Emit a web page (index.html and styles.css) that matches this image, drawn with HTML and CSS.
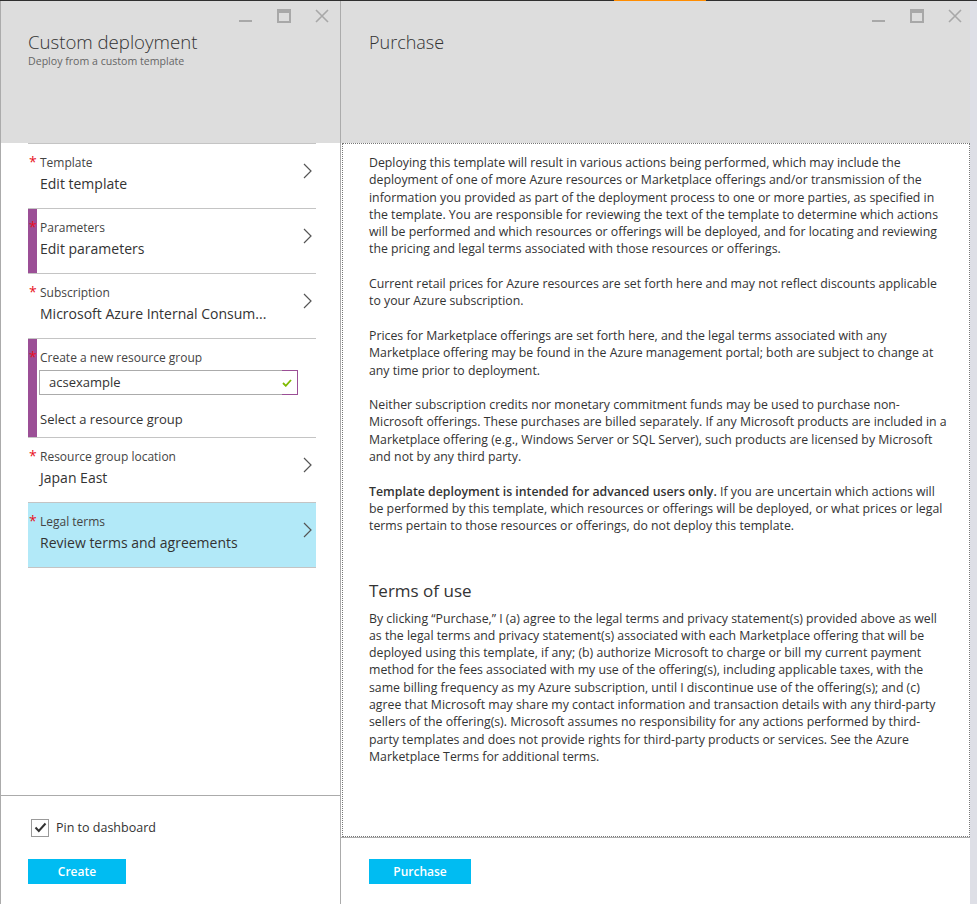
FILE: index.html
```html
<!DOCTYPE html>
<html lang="en">
<head>
<meta charset="utf-8">
<title>Custom deployment</title>
<link rel="stylesheet" href="styles.css">
</head>
<body>
<div class="topbar"><span class="topbar-accent"></span></div>
<div class="app">
  <section class="blade blade-left">
    <header class="blade-header">
      <div class="controls">
        <svg class="ctl" width="14" height="14" viewBox="0 0 14 14"><rect x="0" y="11" width="13" height="2" fill="#a8a8a8"/></svg>
        <svg class="ctl" width="14" height="14" viewBox="0 0 14 14"><rect x="1" y="1" width="12" height="12" fill="none" stroke="#a8a8a8" stroke-width="2"/><rect x="0" y="0" width="14" height="4" fill="#a8a8a8"/></svg>
        <svg class="ctl" width="14" height="14" viewBox="0 0 14 14"><path d="M1 1 L13 13 M13 1 L1 13" stroke="#a8a8a8" stroke-width="1.6" fill="none"/></svg>
      </div>
      <h1 class="blade-title">Custom deployment</h1>
      <p class="blade-subtitle">Deploy from a custom template</p>
    </header>
    <div class="blade-body">
      <ul class="steps">
        <li class="step">
          <div class="step-text"><span class="step-label req">Template</span><span class="step-value">Edit template</span></div>
          <svg class="chev" width="9" height="16" viewBox="0 0 9 16"><polyline points="1,1 8,8 1,15" fill="none" stroke="#555" stroke-width="1.2"/></svg>
        </li>
        <li class="step step-active">
          <div class="step-text"><span class="step-label req">Parameters</span><span class="step-value">Edit parameters</span></div>
          <svg class="chev" width="9" height="16" viewBox="0 0 9 16"><polyline points="1,1 8,8 1,15" fill="none" stroke="#555" stroke-width="1.2"/></svg>
        </li>
        <li class="step">
          <div class="step-text"><span class="step-label req">Subscription</span><span class="step-value">Microsoft Azure Internal Consum...</span></div>
          <svg class="chev" width="9" height="16" viewBox="0 0 9 16"><polyline points="1,1 8,8 1,15" fill="none" stroke="#555" stroke-width="1.2"/></svg>
        </li>
        <li class="step step-active step-group">
          <span class="step-label req">Create a new resource group</span>
          <div class="input">
            <span class="input-field">acsexample</span>
            <span class="input-status"><svg width="10" height="8" viewBox="0 0 10 8"><polyline points="1,4 3.8,6.8 9,1" fill="none" stroke="#7fba00" stroke-width="1.8"/></svg></span>
          </div>
          <span class="step-link">Select a resource group</span>
        </li>
        <li class="step">
          <div class="step-text"><span class="step-label req">Resource group location</span><span class="step-value">Japan East</span></div>
          <svg class="chev" width="9" height="16" viewBox="0 0 9 16"><polyline points="1,1 8,8 1,15" fill="none" stroke="#555" stroke-width="1.2"/></svg>
        </li>
        <li class="step step-selected">
          <div class="step-text"><span class="step-label req">Legal terms</span><span class="step-value">Review terms and agreements</span></div>
          <svg class="chev" width="9" height="16" viewBox="0 0 9 16"><polyline points="1,1 8,8 1,15" fill="none" stroke="#555" stroke-width="1.2"/></svg>
        </li>
      </ul>
    </div>
    <footer class="blade-footer footer-left">
      <label class="pin">
        <span class="checkbox"><svg width="13" height="11" viewBox="0 0 13 11"><polyline points="1.5,5.5 4.8,9 11.5,1.5" fill="none" stroke="#333" stroke-width="2"/></svg></span>
        <span>Pin to dashboard</span>
      </label>
      <button class="btn">Create</button>
    </footer>
  </section>

  <section class="blade blade-right">
    <header class="blade-header header-right">
      <div class="controls">
        <svg class="ctl" width="14" height="14" viewBox="0 0 14 14"><rect x="0" y="11" width="13" height="2" fill="#a8a8a8"/></svg>
        <svg class="ctl" width="14" height="14" viewBox="0 0 14 14"><rect x="1" y="1" width="12" height="12" fill="none" stroke="#a8a8a8" stroke-width="2"/><rect x="0" y="0" width="14" height="4" fill="#a8a8a8"/></svg>
        <svg class="ctl" width="14" height="14" viewBox="0 0 14 14"><path d="M1 1 L13 13 M13 1 L1 13" stroke="#a8a8a8" stroke-width="1.6" fill="none"/></svg>
      </div>
      <h1 class="blade-title title-plain">Purchase</h1>
    </header>
    <div class="purchase-box">
      <div class="purchase-text">
        <p>Deploying this template will result in various actions being performed, which may include the deployment of one of more Azure resources or Marketplace offerings and/or transmission of the information you provided as part of the deployment process to one or more parties, as specified in the template. You are responsible for reviewing the text of the template to determine which actions will be performed and which resources or offerings will be deployed, and for locating and reviewing the pricing and legal terms associated with those resources or offerings.</p>
        <p>Current retail prices for Azure resources are set forth here and may not reflect discounts applicable to your Azure subscription.</p>
        <p>Prices for Marketplace offerings are set forth here, and the legal terms associated with any Marketplace offering may be found in the Azure management portal; both are subject to change at any time prior to deployment.</p>
        <p>Neither subscription credits nor monetary commitment funds may be used to purchase non-Microsoft offerings. These purchases are billed separately. If any Microsoft products are included in a Marketplace offering (e.g., Windows Server or SQL Server), such products are licensed by Microsoft and not by any third party.</p>
        <p><strong>Template deployment is intended for advanced users only.</strong> If you are uncertain which actions will be performed by this template, which resources or offerings will be deployed, or what prices or legal terms pertain to those resources or offerings, do not deploy this template.</p>
        <h2 class="terms-title">Terms of use</h2>
        <p>By clicking “Purchase,” I (a) agree to the legal terms and privacy statement(s) provided above as well as the legal terms and privacy statement(s) associated with each Marketplace offering that will be deployed using this template, if any; (b) authorize Microsoft to charge or bill my current payment method for the fees associated with my use of the offering(s), including applicable taxes, with the same billing frequency as my Azure subscription, until I discontinue use of the offering(s); and (c) agree that Microsoft may share my contact information and transaction details with any third-party sellers of the offering(s). Microsoft assumes no responsibility for any actions performed by third-party templates and does not provide rights for third-party products or services. See the Azure Marketplace Terms for additional terms.</p>
      </div>
    </div>
    <footer class="blade-footer footer-right">
      <button class="btn btn-purchase">Purchase</button>
    </footer>
  </section>
  <div class="scrollbar"></div>
</div>
</body>
</html>
```

FILE: styles.css
```css
* { box-sizing: border-box; }

body {
  margin: 0;
  font-family: "Open Sans", "Noto Sans", sans-serif;
  color: #333;
  background: #fff;
  overflow: hidden;
}

.topbar {
  height: 1px;
  background: #2f2f2f;
  display: flex;
}

.topbar-accent {
  margin-left: 614px;
  width: 92px;
  background: #ff8c00;
}

.app {
  display: flex;
  height: 903px;
}

.blade {
  display: flex;
  flex-direction: column;
  background: #fff;
}

.blade-left {
  width: 341px;
  border-left: 1px solid #ababab;
  border-right: 1px solid #ababab;
}

.blade-right {
  width: 629px;
}

.scrollbar {
  width: 7px;
  background: #dedfe6;
}

.blade-header {
  height: 142px;
  flex: none;
  background: #dddddd;
  padding: 8px 11px 0 27px;
}

.header-right {
  padding: 8px 8px 0 28px;
}

.controls {
  display: flex;
  justify-content: flex-end;
  gap: 24px;
  height: 14px;
}

.ctl { display: block; }

.blade-title {
  margin: 7px 0 0;
  font-size: 18.6px;
  font-weight: 300;
  line-height: 24px;
  color: #333;
}

.title-plain {
  font-size: 18px;
}

.blade-subtitle {
  margin: 0;
  font-size: 10.6px;
  line-height: 15px;
  color: #666;
}

.blade-body {
  flex: 1;
}

.steps {
  list-style: none;
  margin: 0 24px 0 27px;
  padding: 0;
}

.step {
  position: relative;
  display: flex;
  align-items: center;
  border-top: 1px solid #c4c4c4;
  padding: 11px 4px 14px 12px;
}

.step:last-child {
  border-bottom: 1px solid #c4c4c4;
}

.step-active {
  box-shadow: inset 9px 0 0 #9b4f96;
}

.step-selected {
  background: #b2e9f8;
}

.step-text {
  flex: 1;
  display: flex;
  flex-direction: column;
}

.step-label {
  font-size: 12px;
  line-height: 16px;
  color: #444;
}

.req::before {
  content: "*";
  position: absolute;
  left: 1px;
  top: 10px;
  font-size: 14px;
  line-height: 16px;
  color: #e81123;
}

.step-value {
  margin-top: 3px;
  font-size: 14px;
  line-height: 20px;
  color: #333;
  white-space: nowrap;
}

.chev {
  display: block;
  margin-bottom: 8px;
}

.step-group {
  display: block;
  padding: 11px 18px 9px 12px;
}

.step-group .step-label {
  display: block;
}

.input {
  display: flex;
  height: 25px;
  margin: 4px 0 0 -1px;
}

.input-field {
  flex: 1;
  border: 1px solid #ababab;
  border-right: none;
  padding-left: 9px;
  font-size: 13px;
  line-height: 23px;
  color: #333;
}

.input-status {
  width: 16px;
  border: 1px solid #9b4f96;
  border-left: none;
  display: flex;
  align-items: center;
  justify-content: flex-start;
}

.step-link {
  display: block;
  margin-top: 15px;
  font-size: 13px;
  line-height: 18px;
  color: #333;
}

.blade-footer {
  flex: none;
  border-top: 1px solid #ababab;
}

.footer-left {
  height: 109px;
  padding: 23px 0 0 27px;
}

.pin {
  display: flex;
  align-items: center;
  gap: 7px;
  margin-left: 3px;
  height: 17px;
  font-size: 12.5px;
  color: #333;
}

.checkbox {
  width: 18px;
  height: 18px;
  border: 1px solid #9a9a9a;
  display: flex;
  align-items: center;
  justify-content: center;
}

.btn {
  display: block;
  width: 98px;
  height: 25px;
  margin-top: 23px;
  border: none;
  padding: 0;
  background: #00bcf2;
  color: #fff;
  font-family: inherit;
  font-size: 12px;
  font-weight: 600;
}

.footer-right {
  height: 67px;
  padding: 21px 0 0 28px;
}

.btn-purchase {
  width: 102px;
  margin-top: 0;
}

.purchase-box {
  flex: 1;
  margin-left: 1px;
  border: 1px dotted #777;
  padding: 10px 0 0 26px;
  overflow: hidden;
}

.purchase-text {
  width: 580px;
}

.purchase-text p {
  margin: 0 0 17.3px;
  font-size: 12.3px;
  line-height: 17.3px;
  color: #333;
}

.purchase-text strong {
  font-weight: 600;
}

.terms-title {
  margin: 44px 0 7px;
  font-size: 17px;
  font-weight: 400;
  line-height: 24px;
  color: #333;
}
```
